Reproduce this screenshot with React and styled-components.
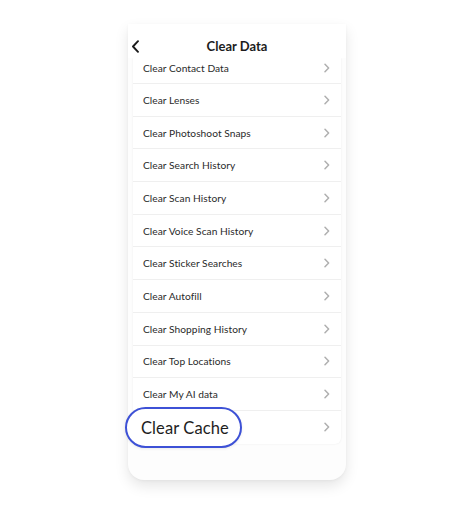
import React from "react";
import styled, { createGlobalStyle } from "styled-components";

const Global = createGlobalStyle`
  html, body { margin: 0; padding: 0; background: #ffffff; }
  body { font-family: "Lato", "Open Sans", sans-serif; }
`;

const Page = styled.div`
  width: 474px;
  height: 505px;
  display: flex;
  justify-content: flex-start;
  padding: 24px 0 0 128px;
  box-sizing: border-box;
`;

const Phone = styled.div`
  position: relative;
  width: 218px;
  height: 456px;
  background: #fdfdfd;
  border-radius: 0 0 16px 16px;
  box-shadow: 0 6px 14px rgba(0, 0, 0, 0.10), 0 1px 3px rgba(0, 0, 0, 0.04);
  display: flex;
  flex-direction: column;
`;

const Header = styled.div`
  height: 34px;
  display: flex;
  align-items: center;
  justify-content: center;
  position: relative;
  background: #ffffff;
  flex-shrink: 0;
`;

const Back = styled.svg`
  position: absolute;
  left: 3px;
  top: 16px;
`;

const Title = styled.div`
  font-size: 13px;
  font-weight: 700;
  color: #1c1c1c;
  margin-top: 10px;
  letter-spacing: 0;
`;

const List = styled.div`
  margin: 0 5px;
  background: #ffffff;
  box-shadow: 0 0 2px rgba(0, 0, 0, 0.08);
  border-radius: 0 0 6px 6px;
  display: flex;
  flex-direction: column;
`;

const Row = styled.div`
  height: ${(p) => p.$h}px;
  box-sizing: border-box;
  display: flex;
  align-items: center;
  justify-content: space-between;
  padding: ${(p) => (p.$first ? "0 11px 6px 10px" : "0 11px 0 10px")};
  border-bottom: ${(p) => (p.$last ? "none" : "1px solid #efefef")};
`;

const Label = styled.span`
  font-size: 10.2px;
  color: #2a2a2a;
  letter-spacing: 0.05px;
`;

const Chevron = () => (
  <svg width="6" height="10" viewBox="0 0 6 10">
    <path d="M1 1.2l3.6 3.8L1 8.8" fill="none" stroke="#b0b0b0" strokeWidth="1.5" strokeLinecap="round" strokeLinejoin="round" />
  </svg>
);

const Highlight = styled.div`
  position: absolute;
  left: -3px;
  top: 383px;
  width: 99px;
  height: 37px;
  border: 2px solid #3d51d6;
  border-radius: 21px;
  background: #ffffff;
  display: flex;
  align-items: center;
  padding-left: 14px;
  box-sizing: content-box;
  box-shadow: 0 1px 3px rgba(0, 0, 0, 0.08);
`;

const BigLabel = styled.span`
  font-size: 16.5px;
  color: #1e1e1e;
  letter-spacing: 0.1px;
  white-space: nowrap;
`;

const items = [
  "Clear Contact Data",
  "Clear Lenses",
  "Clear Photoshoot Snaps",
  "Clear Search History",
  "Clear Scan History",
  "Clear Voice Scan History",
  "Clear Sticker Searches",
  "Clear Autofill",
  "Clear Shopping History",
  "Clear Top Locations",
  "Clear My AI data",
  "Clear Cache",
];

export default function App() {
  return (
    <>
      <Global />
      <Page>
        <Phone>
          <Header>
            <Back width="9" height="13" viewBox="0 0 9 13">
              <path d="M7 1.2L2 6.5l5 5.3" fill="none" stroke="#1a1a1a" strokeWidth="1.9" strokeLinecap="round" strokeLinejoin="round" />
            </Back>
            <Title>Clear Data</Title>
          </Header>
          <List>
            {items.map((t, i) => (
              <Row key={t} $h={i === 0 ? 26 : 32.7} $first={i === 0} $last={i === items.length - 1}>
                <Label>{i === items.length - 1 ? "" : t}</Label>
                <Chevron />
              </Row>
            ))}
          </List>
          <Highlight>
            <BigLabel>Clear Cache</BigLabel>
          </Highlight>
        </Phone>
      </Page>
    </>
  );
}
